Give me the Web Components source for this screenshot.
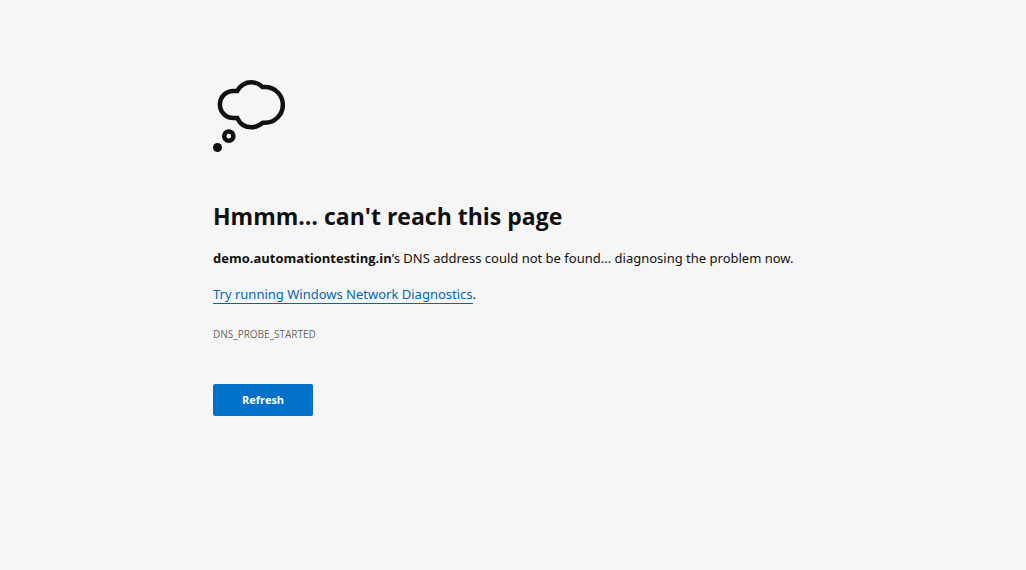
<!DOCTYPE html>
<html lang="en">
<head>
<meta charset="utf-8">
<meta name="viewport" content="width=device-width, initial-scale=1">
<title>demo.automationtesting.in</title>
<style>
  body {
    margin: 0;
    background: #f6f6f6;
    color: #101010;
    font: 13px/20px "Segoe UI", "Noto Sans", "Open Sans", sans-serif;
  }
  strong { font-family: "Segoe UI", "Open Sans", sans-serif; }
</style>
</head>
<body>
<error-page>
  <thought-icon slot="icon"></thought-icon>
  <span slot="title">Hmmm… can't reach this page</span>
  <span slot="summary"><strong>demo.automationtesting.in</strong>’s DNS address could not be found... diagnosing the problem now.</span>
  <span slot="suggestion"><text-link href="#diagnostics">Try running Windows Network Diagnostics</text-link>.</span>
  <span slot="code">DNS_PROBE_STARTED</span>
  <action-button slot="action">Refresh</action-button>
</error-page>
<script>
  function define(name, html, setup) {
    const template = document.createElement('template');
    template.innerHTML = html;
    customElements.define(name, class extends HTMLElement {
      constructor() {
        super();
        this.attachShadow({ mode: 'open' }).append(template.content.cloneNode(true));
      }
      connectedCallback() {
        if (setup) setup(this);
      }
    });
  }

  define('thought-icon', `
    <style>
      :host { display: block; width: 72px; height: 72px; }
      svg { display: block; width: 100%; height: 100%; }
    </style>
    <svg viewBox="0 0 72 72" fill="none" stroke="#101010" stroke-width="4.5" aria-hidden="true">
      <path d="M24.3 11H20.4A13.4 13.4 0 0 0 20.4 38H24.2C27 44 32 47.3 38.3 47.3C42.6 47.3 46.6 45.6 49.8 42.7H52A17.85 17.85 0 0 0 52 7H49.4C46.3 4 42.4 2.3 38.3 2.3C32.3 2.3 27.3 5.6 24.3 11Z"/>
      <circle cx="15.8" cy="56.2" r="4.6"/>
      <circle cx="4.5" cy="67.5" r="4.5" fill="#101010" stroke="none"/>
    </svg>`);

  define('text-link', `
    <style>
      :host { display: inline; }
      a { color: #0067b8; text-decoration: none; border-bottom: 1px solid #0067b8; }
    </style>
    <a><slot></slot></a>`, host => {
      host.shadowRoot.querySelector('a').href = host.getAttribute('href');
    });

  define('action-button', `
    <style>
      :host { display: inline-block; }
      button {
        display: block;
        min-width: 100px;
        height: 32px;
        padding: 0 12px;
        border: 0;
        border-radius: 2px;
        background: #0070c9;
        color: #fff;
        font: 700 11px/16px "Segoe UI", "Open Sans", "Noto Sans", sans-serif;
        cursor: pointer;
      }
    </style>
    <button type="button"><slot></slot></button>`, host => {
      host.shadowRoot.querySelector('button').onclick = () => location.reload();
    });

  define('error-page', `
    <style>
      :host { display: block; padding: 80px 16px; }
      main { max-width: 600px; margin: 0 auto; }
      h1 { margin: 48px 0 16px; font: 700 23px/32px "Segoe UI", "Open Sans", sans-serif; }
      p { margin: 0 0 16px; }
      .code { margin: 20px 0 40px; color: #666; font: 10px/20px "Segoe UI", "Open Sans", sans-serif; }
    </style>
    <main>
      <slot name="icon"></slot>
      <h1><slot name="title"></slot></h1>
      <p><slot name="summary"></slot></p>
      <p><slot name="suggestion"></slot></p>
      <p class="code"><slot name="code"></slot></p>
      <slot name="action"></slot>
    </main>`);
</script>
</body>
</html>
